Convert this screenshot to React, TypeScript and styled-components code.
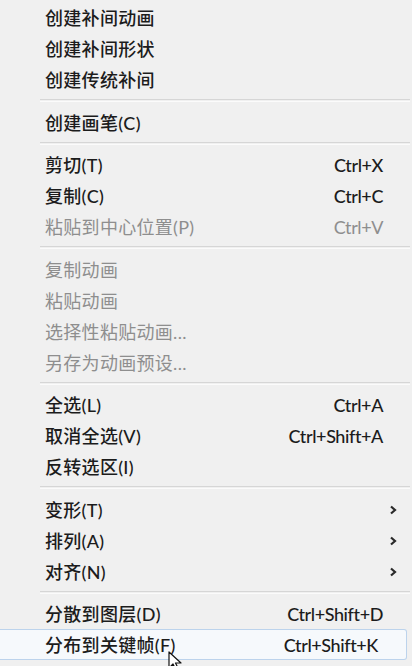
import React from "react";
import styled, { createGlobalStyle } from "styled-components";

const Global = createGlobalStyle`
  html, body { margin: 0; padding: 0; background: #f0f0f0; overflow: hidden; }
  #root { width: 412px; height: 666px; }
`;

const Menu = styled.div`
  position: relative;
  box-sizing: border-box;
  width: 412px;
  height: 666px;
  padding-top: 2px;
  background: #f0f0f0;
  display: flex;
  flex-direction: column;
  font-family: "Lato", "Noto Sans CJK SC", sans-serif;
  font-size: 18px;
  overflow: hidden;
`;

const Row = styled.div<{ $disabled?: boolean; $hot?: boolean }>`
  box-sizing: border-box;
  flex: 0 0 31px;
  height: 31px;
  display: grid;
  grid-template-columns: 1fr auto 28px;
  align-items: center;
  padding-left: 45px;
  margin-right: ${(p) => (p.$hot ? "5px" : "0")};
  line-height: 31px;
  color: ${(p) => (p.$disabled ? "#8e8e8e" : "#1c1c1c")};
  font-weight: ${(p) => (p.$disabled ? 400 : 500)};
  border: 1px solid ${(p) => (p.$hot ? "#bcd3ec" : "transparent")};
  border-left: none;
  border-radius: 0 3px 3px 0;
  background: ${(p) => (p.$hot ? "#f6f9fc" : "transparent")};
  white-space: nowrap;
`;

const Label = styled.span`
  letter-spacing: 0.3px;
`;

const Shortcut = styled.span`
  text-align: right;
  letter-spacing: -0.4px;
`;

const ArrowCell = styled.span`
  display: flex;
  align-items: center;
  padding-left: 6px;
`;

const Separator = styled.div`
  flex: 0 0 11.5px;
  display: flex;
  align-items: center;
  padding-left: 40px;
  padding-right: 2px;
  &::after {
    content: "";
    flex: 1;
    height: 1px;
    border-top: 1px solid #d6d6d6;
    border-bottom: 1px solid #fbfbfb;
  }
`;

const Cursor = styled.svg`
  position: absolute;
  left: 168px;
  top: 651px;
`;

const Chevron = () => (
  <svg width="8" height="10" viewBox="0 0 8 10">
    <polyline points="2,1.5 6,5 2,8.5" fill="none" stroke="#2a2a2a" strokeWidth="2.2" />
  </svg>
);

type Item =
  | { sep: true }
  | { label: string; shortcut?: string; disabled?: boolean; sub?: boolean; hot?: boolean };

const items: Item[] = [
  { label: "创建补间动画" },
  { label: "创建补间形状" },
  { label: "创建传统补间" },
  { sep: true },
  { label: "创建画笔(C)" },
  { sep: true },
  { label: "剪切(T)", shortcut: "Ctrl+X" },
  { label: "复制(C)", shortcut: "Ctrl+C" },
  { label: "粘贴到中心位置(P)", shortcut: "Ctrl+V", disabled: true },
  { sep: true },
  { label: "复制动画", disabled: true },
  { label: "粘贴动画", disabled: true },
  { label: "选择性粘贴动画...", disabled: true },
  { label: "另存为动画预设...", disabled: true },
  { sep: true },
  { label: "全选(L)", shortcut: "Ctrl+A" },
  { label: "取消全选(V)", shortcut: "Ctrl+Shift+A" },
  { label: "反转选区(I)" },
  { sep: true },
  { label: "变形(T)", sub: true },
  { label: "排列(A)", sub: true },
  { label: "对齐(N)", sub: true },
  { sep: true },
  { label: "分散到图层(D)", shortcut: "Ctrl+Shift+D" },
  { label: "分布到关键帧(F)", shortcut: "Ctrl+Shift+K", hot: true },
];

export default function App() {
  return (
    <>
      <Global />
      <Menu>
        {items.map((it, i) =>
          "sep" in it ? (
            <Separator key={i} />
          ) : (
            <Row key={i} $disabled={it.disabled} $hot={it.hot}>
              <Label>{it.label}</Label>
              <Shortcut>{it.shortcut ?? ""}</Shortcut>
              <ArrowCell>{it.sub ? <Chevron /> : null}</ArrowCell>
            </Row>
          )
        )}
        <Cursor width="14" height="20" viewBox="0 0 14 20">
          <path d="M1 1 L1 17 L5 13 L8 19 L10.5 18 L7.5 12 L13 12 Z" fill="#fff" stroke="#111" strokeWidth="1.2" strokeLinejoin="round" />
        </Cursor>
      </Menu>
    </>
  );
}
